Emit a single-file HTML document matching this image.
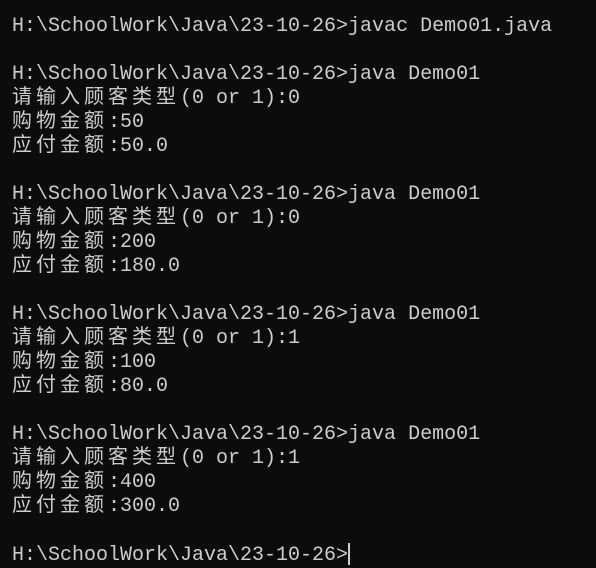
<!DOCTYPE html><html><head><style>
body{margin:0;background:#0c0c0c;width:596px;height:567px;overflow:hidden}
.t{padding:15px 0 0 12px;font-family:"Liberation Mono","Noto Sans CJK SC",monospace;font-size:20px;color:#cccccc}
.t div{height:24px;line-height:24px;white-space:pre;overflow:visible}
.c{font-family:"Noto Sans CJK SC",sans-serif;letter-spacing:4px;line-height:0}
.cur{display:inline-block;width:2px;height:22px;background:#cccccc;vertical-align:-5px}
</style></head><body><div class="t">
<div>H:\SchoolWork\Java\23-10-26&gt;javac Demo01.java</div>
<div></div>
<div>H:\SchoolWork\Java\23-10-26&gt;java Demo01</div>
<div><span class="c">请输入顾客类型</span>(0 or 1):0</div>
<div><span class="c">购物金额</span>:50</div>
<div><span class="c">应付金额</span>:50.0</div>
<div></div>
<div>H:\SchoolWork\Java\23-10-26&gt;java Demo01</div>
<div><span class="c">请输入顾客类型</span>(0 or 1):0</div>
<div><span class="c">购物金额</span>:200</div>
<div><span class="c">应付金额</span>:180.0</div>
<div></div>
<div>H:\SchoolWork\Java\23-10-26&gt;java Demo01</div>
<div><span class="c">请输入顾客类型</span>(0 or 1):1</div>
<div><span class="c">购物金额</span>:100</div>
<div><span class="c">应付金额</span>:80.0</div>
<div></div>
<div>H:\SchoolWork\Java\23-10-26&gt;java Demo01</div>
<div><span class="c">请输入顾客类型</span>(0 or 1):1</div>
<div><span class="c">购物金额</span>:400</div>
<div><span class="c">应付金额</span>:300.0</div>
<div></div>
<div>H:\SchoolWork\Java\23-10-26&gt;<span class="cur"></span></div>
</div></body></html>
